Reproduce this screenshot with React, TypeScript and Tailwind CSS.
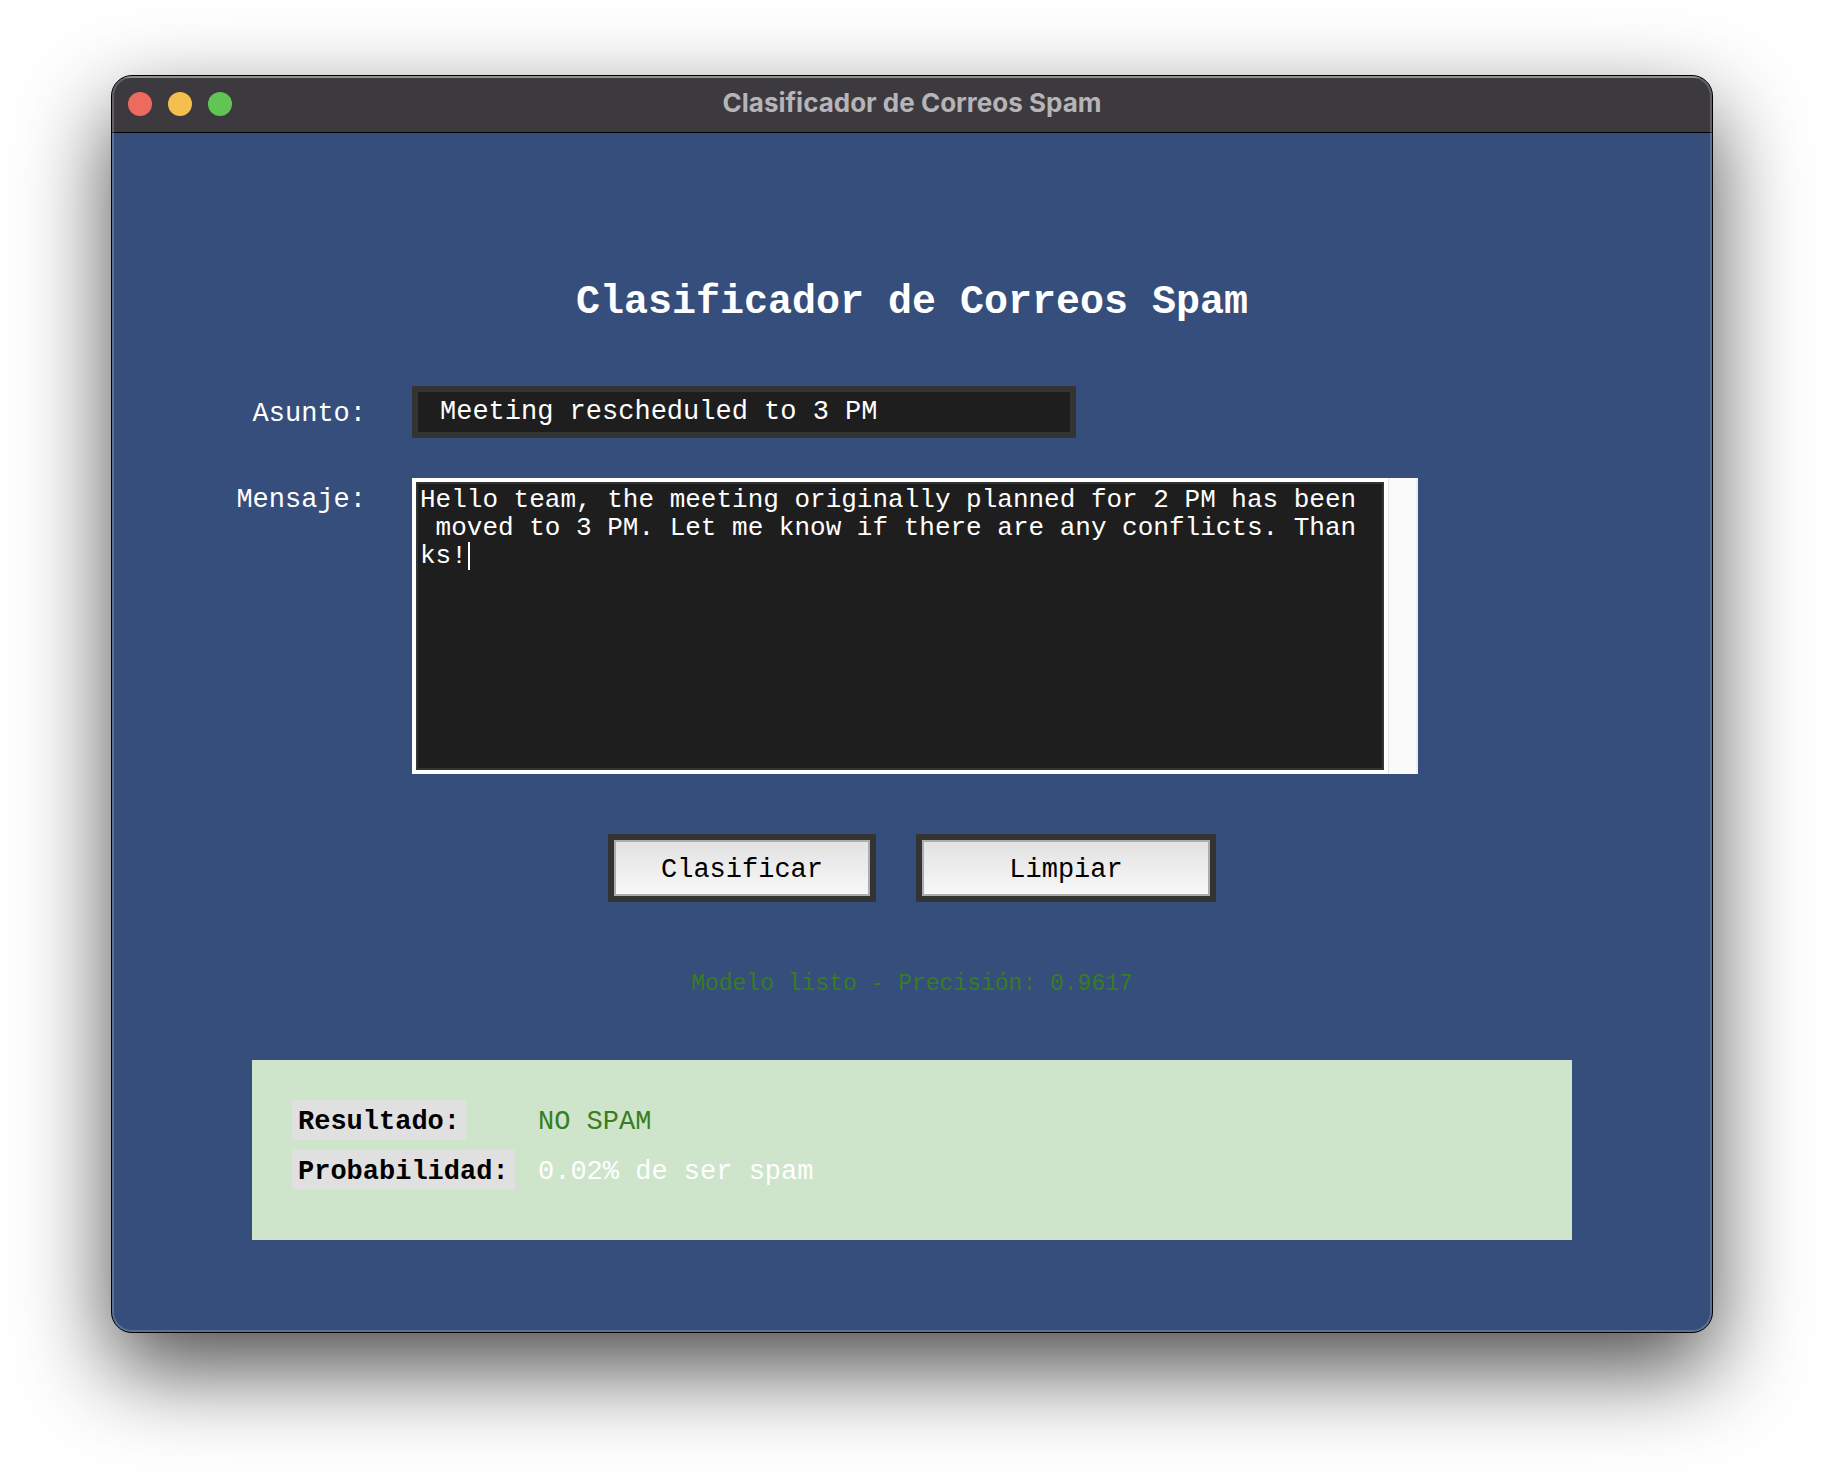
import { useState } from "react";

const MONO = "font-['Liberation_Mono',monospace]";

const INITIAL_SUBJECT = "Meeting rescheduled to 3 PM";
const INITIAL_MESSAGE =
  "Hello team, the meeting originally planned for 2 PM has been\n moved to 3 PM. Let me know if there are any conflicts. Than\nks!";

function TitleBar() {
  return (
    <header className="grid h-14 grid-cols-[1fr_auto_1fr] items-center bg-[#3c3a3e] px-4 shadow-[inset_0_2px_0_#757476]">
      <div className="flex gap-4">
        <button type="button" aria-label="Cerrar" className="size-6 rounded-full bg-[#ed6a5e]" />
        <button type="button" aria-label="Minimizar" className="size-6 rounded-full bg-[#f5bf4f]" />
        <button type="button" aria-label="Maximizar" className="size-6 rounded-full bg-[#61c554]" />
      </div>
      <div className="pb-0.5 font-[Inter,sans-serif] text-[26px] leading-8 font-bold text-[#b6b4b9]">
        Clasificador de Correos Spam
      </div>
    </header>
  );
}

export default function App() {
  const [subject, setSubject] = useState(INITIAL_SUBJECT);
  const [message, setMessage] = useState(INITIAL_MESSAGE);

  const clear = () => {
    setSubject("");
    setMessage("");
  };

  return (
    <div className="min-h-screen bg-white px-[111px] pt-[75px] pb-[146px]">
      <main className="relative overflow-hidden rounded-[21px] border border-black bg-[#364e7b] shadow-[0_36px_90px_rgba(0,0,0,0.7)]">
        <TitleBar />
        <div className={`border-t border-black px-[140px] pt-[146px] pb-[92px] text-[27px] leading-7 text-white ${MONO}`}>
          <h1 className="text-center text-[40px] leading-[48px] font-bold">Clasificador de Correos Spam</h1>

          <form onSubmit={(e) => e.preventDefault()}>
            <div className="mt-[59px] grid grid-cols-[114px_1fr] items-start gap-x-[46px] gap-y-10">
              <label htmlFor="subject" className="justify-self-end pt-3.5">
                Asunto:
              </label>
              <input
                id="subject"
                type="text"
                value={subject}
                onChange={(e) => setSubject(e.target.value)}
                className="h-[52px] w-full max-w-[664px] rounded-none border-[6px] border-[#333333] bg-[#1e1e1e] px-[22px] text-white outline-none"
              />

              <label htmlFor="message" className="justify-self-end pt-2">
                Mensaje:
              </label>
              <div className="relative flex w-full max-w-[1006px] bg-white">
                <textarea
                  id="message"
                  value={message}
                  onChange={(e) => setMessage(e.target.value)}
                  className="m-1 block h-72 min-w-0 flex-1 resize-none overflow-hidden rounded-none border-2 border-[#333333] bg-[#1e1e1e] p-0.5 text-[26px] whitespace-pre text-white outline-none"
                />
                <div className="w-[30px] border-r-2 border-l border-r-[#ededed] border-l-[#e4e4e4] bg-[#fafafa]" />
                {message === INITIAL_MESSAGE && <span className="absolute top-16 left-14 h-7 w-0.5 bg-white" />}
              </div>
            </div>

            <div className="mt-[60px] flex justify-center gap-10">
              <button
                type="submit"
                className="w-[268px] border-[6px] border-[#333333] bg-[#aeaeae] p-0.5 text-black"
              >
                <span className="block bg-linear-to-b from-[#e2e2e2] to-[#f8f8f8] pt-3.5 pb-2.5">Clasificar</span>
              </button>
              <button
                type="button"
                onClick={clear}
                className="w-[300px] border-[6px] border-[#333333] bg-[#aeaeae] p-0.5 text-black"
              >
                <span className="block bg-linear-to-b from-[#e2e2e2] to-[#f8f8f8] pt-3.5 pb-2.5">Limpiar</span>
              </button>
            </div>
          </form>

          <p className="mt-[68px] text-center text-[23px] text-[#377d22]">Modelo listo - Precisión: 0.9617</p>

          <dl className="mt-[62px] grid h-[180px] grid-cols-[224px_1fr] content-start items-center gap-x-[22px] gap-y-[10px] bg-[#cee5cb] px-10 pt-10">
            <dt className="justify-self-start bg-[#e0e0e0] px-1.5 pt-2 pb-1 font-bold text-black">Resultado:</dt>
            <dd className="pt-1 text-[#377d22]">NO SPAM</dd>
            <dt className="justify-self-start bg-[#e0e0e0] px-1.5 pt-2 pb-1 font-bold text-black">Probabilidad:</dt>
            <dd className="pt-1">0.02% de ser spam</dd>
          </dl>
        </div>
        <div className="pointer-events-none absolute inset-0 rounded-[20px] border-2 border-white/20" />
      </main>
    </div>
  );
}
